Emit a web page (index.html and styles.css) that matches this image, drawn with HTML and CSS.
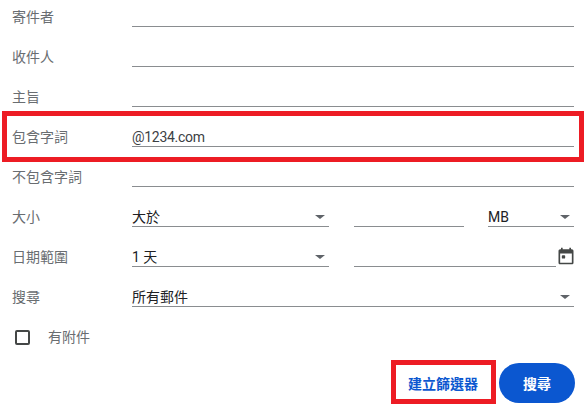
FILE: index.html
```html
<!DOCTYPE html>
<html lang="zh-Hant">
<head>
  <meta charset="UTF-8" />
  <meta name="viewport" content="width=device-width, initial-scale=1.0" />
  <title>搜尋篩選器</title>
  <link rel="stylesheet" href="styles.css">
</head>
<body>
  <div class="filter-form">
    <div class="row">
      <span class="row-label">寄件者</span>
      <div class="field"></div>
    </div>
    <div class="row">
      <span class="row-label">收件人</span>
      <div class="field"></div>
    </div>
    <div class="row">
      <span class="row-label">主旨</span>
      <div class="field"></div>
    </div>
    <div class="row">
      <span class="row-label">包含字詞</span>
      <div class="field field-email">@1234.com</div>
    </div>
    <div class="row">
      <span class="row-label">不包含字詞</span>
      <div class="field"></div>
    </div>
    <div class="row">
      <span class="row-label">大小</span>
      <div class="field select select-main">大於</div>
      <div class="field field-size"></div>
      <div class="field select select-unit">MB</div>
    </div>
    <div class="row">
      <span class="row-label">日期範圍</span>
      <div class="field select select-main">1 天</div>
      <div class="field field-date"></div>
      <svg class="calendar-icon" viewBox="0 0 24 24" width="20" height="20">
        <path fill="#444746" d="M19 4h-1V2h-2v2H8V2H6v2H5c-1.1 0-2 .9-2 2v14c0 1.1.9 2 2 2h14c1.1 0 2-.9 2-2V6c0-1.1-.9-2-2-2zm0 16H5V9h14v11z"/>
        <rect fill="#444746" x="7" y="11" width="4" height="4" rx="1"/>
      </svg>
    </div>
    <div class="row">
      <span class="row-label">搜尋</span>
      <div class="field select">所有郵件</div>
    </div>
    <div class="check-row">
      <span class="checkbox"></span>
      <span class="row-label">有附件</span>
    </div>
    <div class="actions">
      <button class="btn btn-text">建立篩選器</button>
      <button class="btn btn-filled">搜尋</button>
    </div>
  </div>

  <!-- annotation boxes -->
  <div class="mark mark-row"></div>
  <div class="mark mark-btn"></div>
</body>
</html>
```

FILE: styles.css
```css
*, *::before, *::after {
  box-sizing: border-box;
}
body {
  margin: 0;
  width: 588px;
  height: 413px;
  overflow: hidden;
  position: relative;
  background-color: #fff;
  font-family: Roboto, "Noto Sans CJK TC", sans-serif;
  font-size: 14px;
  color: #202124;
}
.filter-form {
  display: flex;
  flex-direction: column;
  gap: 13px;
  padding: 0 14px 0 12px;
}
.row {
  display: flex;
  align-items: flex-end;
  height: 27px;
}
.row-label {
  flex: none;
  width: 120px;
  color: #696d71;
  line-height: 20px;
}
.field {
  flex: 1;
  min-width: 0;
  height: 27px;
  line-height: 18px;
  display: flex;
  align-items: flex-end;
  border-bottom: 1px solid #8a8d90;
  position: relative;
}
.field-email {
  letter-spacing: -0.3px;
  color: #3c4043;
}
.select::after {
  content: "";
  position: absolute;
  right: 4px;
  top: 15px;
  border-left: 5px solid transparent;
  border-right: 5px solid transparent;
  border-top: 4px solid #5f6368;
}
.select-main {
  flex: none;
  width: 197px;
}
.field-size {
  flex: none;
  width: 110px;
  margin-left: 25px;
}
.select-unit {
  flex: none;
  width: 86px;
  margin-left: 24px;
}
.field-date {
  flex: none;
  width: 202px;
  margin-left: 25px;
}
.calendar-icon {
  flex: none;
  margin-bottom: 1px;
}
.check-row {
  display: flex;
  align-items: center;
  height: 20px;
  margin-top: 7px;
  padding-left: 3px;
  gap: 18px;
}
.checkbox {
  flex: none;
  width: 15px;
  height: 15px;
  border: 2px solid #444746;
  border-radius: 2px;
}
.actions {
  display: flex;
  justify-content: flex-end;
  gap: 8px;
  margin-top: 3px;
  margin-right: -1px;
}
.btn {
  height: 40px;
  border: none;
  border-radius: 20px;
  font-family: inherit;
  font-size: 14px;
  font-weight: 700;
  padding: 0;
  cursor: pointer;
}
.btn-text {
  width: 94px;
  padding-right: 2px;
  background-color: transparent;
  color: #0b57d0;
}
.btn-filled {
  width: 76px;
  background-color: #0b57d0;
  color: #fff;
}
.mark {
  position: absolute;
  border: 5px solid #ed1c24;
  pointer-events: none;
}
.mark-row {
  left: 2px;
  top: 111px;
  width: 582px;
  height: 51px;
}
.mark-btn {
  left: 391px;
  top: 360px;
  width: 105px;
  height: 44px;
}
```
